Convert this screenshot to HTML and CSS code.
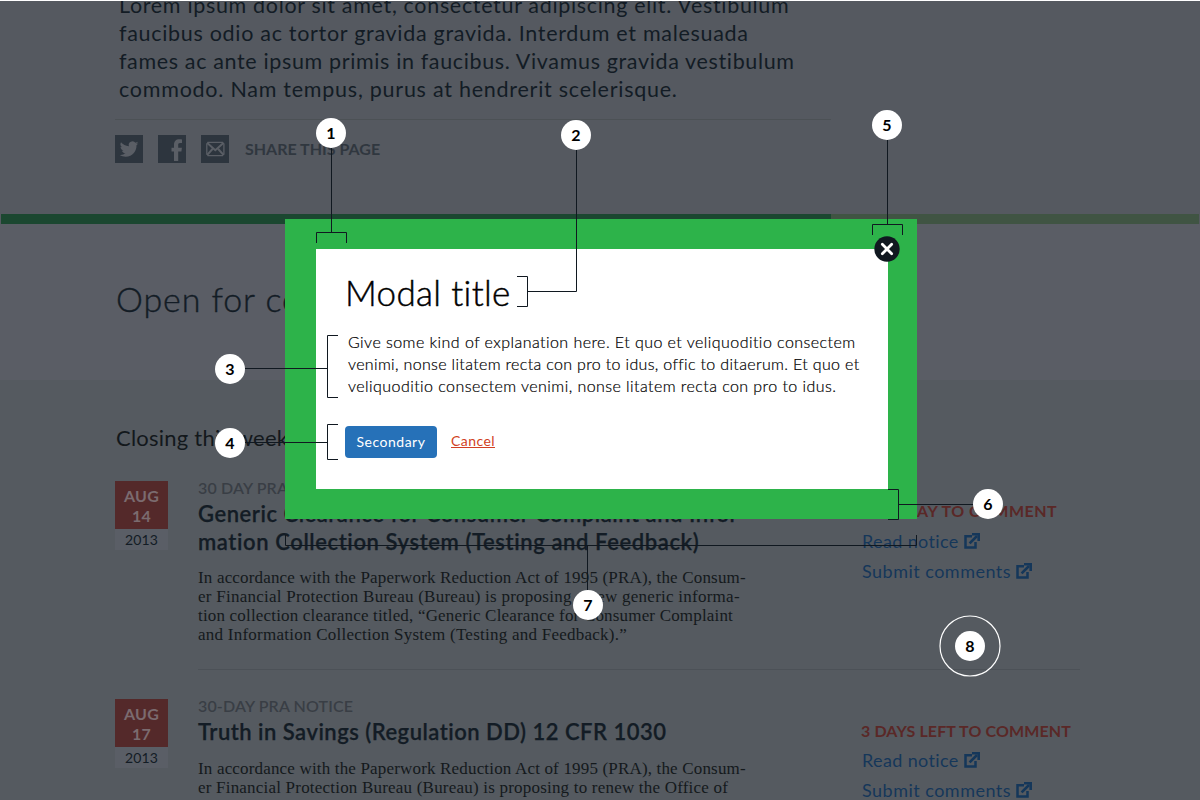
FILE: index.html
```html
<!DOCTYPE html>
<html lang="en">
<head>
<meta charset="utf-8">
<title>Modal anatomy</title>
<link rel="stylesheet" href="styles.css">
</head>
<body>
<svg class="defs" width="0" height="0" aria-hidden="true">
  <symbol id="ext" viewBox="0 0 16 16">
    <path d="M8 3.200H1.500v11.300h10V9" fill="none" stroke="currentColor" stroke-width="2.500"/>
    <path d="M5.600 10.400L13 3" fill="none" stroke="currentColor" stroke-width="2.600"/>
    <path d="M8 0h8v8h-2.600V2.600H8z" fill="currentColor"/>
  </symbol>
</svg>

<main class="page">
  <section class="hero">
    <p class="lead">
      <span class="l1">Lorem ipsum dolor sit amet, consectetur adipiscing elit. Vestibulum</span>
      <span class="l2">faucibus odio ac tortor gravida gravida. Interdum et malesuada</span>
      <span class="l3">fames ac ante ipsum primis in faucibus. Vivamus gravida vestibulum</span>
      <span class="l4">commodo. Nam tempus, purus at hendrerit scelerisque.</span>
    </p>
    <div class="share">
      <svg class="social" viewBox="0 0 28 28"><rect width="28" height="28" fill="#2d353e"/><path fill="#5a5e65" d="M23.4 8.3c-.7.3-1.4.5-2.2.6.8-.5 1.4-1.2 1.7-2.1-.7.4-1.6.8-2.4.9a3.8 3.8 0 0 0-6.6 3.5c-3.200-.2-6-1.700-7.900-4a3.900 3.900 0 0 0 1.200 5.100c-.6 0-1.200-.2-1.700-.5 0 1.800 1.300 3.500 3.100 3.800-.6.1-1.100.2-1.700.1.500 1.500 1.900 2.600 3.600 2.600A7.700 7.700 0 0 1 4.800 20c1.700 1.100 3.700 1.700 5.900 1.700 7.100 0 11.100-6 10.800-11.400.7-.5 1.400-1.200 1.900-2z"/></svg>
      <svg class="social" viewBox="0 0 28 28"><rect width="28" height="28" fill="#2d353e"/><path fill="#5a5e65" d="M16 26V16.500h-2.500v-3.800H16V9.800C16 6.200 18 4.200 21.300 4.200c1.200 0 2.200.1 2.700.2v3.500h-1.900c-1.500 0-1.900.7-1.900 1.900v2.900h3.700l-.5 3.800h-3.200V26z"/></svg>
      <svg class="social" viewBox="0 0 28 28"><rect width="28" height="28" fill="#2d353e"/><g fill="none" stroke="#5a5e65"><path stroke-width="1.300" d="M5.800 8.500v11M22.900 8.500v11"/><path stroke-width="2" d="M6 7.800l8.300 7.400 8.400-7.400M6 20.200l5.500-6.200M22.700 20.200l-5.500-6.200"/><path stroke-width="1.300" d="M6.500 7.400H22M6.500 20.600H22"/></g></svg>
      <span class="share-text">SHARE THIS PAGE</span>
    </div>
  </section>
  <div class="bar"><div class="bar-main"></div><div class="bar-side"></div></div>
  <section class="intro"><h1 class="intro-title">Open for comment</h1></section>
  <section class="list">
    <h2 class="list-title">Closing this week</h2>
    <article class="item">
      <div class="date"><div class="date-day">AUG<br>14</div><div class="date-year">2013</div></div>
      <div class="item-body">
        <div class="label">30 DAY PRA NOTICE</div>
        <h3 class="item-title"><span class="t1">Generic Clearance for Consumer Complaint and Infor-</span><span class="t2">mation Collection System (Testing and Feedback)</span></h3>
        <p class="text">
          <span class="b1">In accordance with the Paperwork Reduction Act of 1995 (PRA), the Consum-</span>
          <span class="b2">er Financial Protection Bureau (Bureau) is proposing a new generic informa-</span>
          <span class="b3">tion collection clearance titled, “Generic Clearance for Consumer Complaint</span>
          <span class="b4">and Information Collection System (Testing and Feedback).”</span>
        </p>
      </div>
      <div class="side">
        <div class="due due-last">LAST DAY TO COMMENT</div>
        <a class="link read">Read notice<svg class="ext"><use href="#ext"/></svg></a>
        <a class="link">Submit comments<svg class="ext"><use href="#ext"/></svg></a>
      </div>
    </article>
    <div class="rule"></div>
    <article class="item item-second">
      <div class="date"><div class="date-day">AUG<br>17</div><div class="date-year">2013</div></div>
      <div class="item-body">
        <div class="label">30-DAY PRA NOTICE</div>
        <h3 class="item-title"><span class="t3">Truth in Savings (Regulation DD) 12 CFR 1030</span></h3>
        <p class="text">
          <span class="b1">In accordance with the Paperwork Reduction Act of 1995 (PRA), the Consum-</span>
          <span class="b5">er Financial Protection Bureau (Bureau) is proposing to renew the Office of</span>
        </p>
      </div>
      <div class="side">
        <div class="due">3 DAYS LEFT TO COMMENT</div>
        <a class="link read">Read notice<svg class="ext"><use href="#ext"/></svg></a>
        <a class="link">Submit comments<svg class="ext"><use href="#ext"/></svg></a>
      </div>
    </article>
  </section>
</main>

<div class="modal-frame">
  <div class="modal">
    <h2 class="modal-title">Modal title</h2>
    <p class="modal-text">
      <span class="p1">Give some kind of explanation here. Et quo et veliquoditio consectem</span>
      <span class="p2">venimi, nonse litatem recta con pro to idus, offic to ditaerum. Et quo et</span>
      <span class="p3">veliquoditio consectem venimi, nonse litatem recta con pro to idus.</span>
    </p>
    <div class="actions"><span class="button">Secondary</span><a class="cancel">Cancel</a></div>
  </div>
  <svg class="close" viewBox="0 0 26 26"><circle cx="13" cy="13" r="12.700" fill="#101820"/><path d="M8.300 8.300l9.400 9.400M17.700 8.300l-9.400 9.400" stroke="#fff" stroke-width="2.800" stroke-linecap="round"/></svg>
</div>

<svg class="callouts" width="1200" height="800" viewBox="0 0 1200 800">
  <g fill="none" stroke="#101820" stroke-width="1">
    <path d="M331.500 148V232M316.500 243V232.500H346.500V243"/>
    <path d="M576.500 150V291.500H528M517 276.500H527.500V306.500H517"/>
    <path d="M245 368.500H327M338 335.500H327.500V397.500H338"/>
    <path d="M245 442.500H327M338 424.500H327.500V459.500H338"/>
    <path d="M887.500 140V224M872.500 235V224.500H902.500V235"/>
    <path d="M973 504.500H899M888 489.500H898.500V519.500H888"/>
    <path d="M587.500 590V546M285.500 535V545.500H916.500V535"/>
  </g>
  <circle cx="970" cy="646" r="30" fill="none" stroke="#fff" stroke-width="1.200"/>
</svg>
<span class="pin pin-1">1</span>
<span class="pin pin-2">2</span>
<span class="pin pin-3">3</span>
<span class="pin pin-4">4</span>
<span class="pin pin-5">5</span>
<span class="pin pin-6">6</span>
<span class="pin pin-7">7</span>
<span class="pin pin-8">8</span>
</body>
</html>
```

FILE: styles.css
```css
* { box-sizing: border-box; }
body {
  margin: 0;
  width: 1200px;
  height: 800px;
  overflow: hidden;
  position: relative;
  background: #555960;
  font-family: Lato, "Liberation Sans", sans-serif;
  color: #131c25;
}
h1, h2, h3, p { margin: 0; font-weight: 400; }
.defs { position: absolute; }
.page { height: 800px; overflow: hidden; border-top: 1px solid #fff; }

.hero { height: 213px; padding: 0 0 0 115px; overflow: hidden; }
.lead { margin: -10px 0 16px 4px; font-size: 21.5px; line-height: 28px; }
.lead span, .item-title span, .text span, .modal-text span { display: block; white-space: nowrap; }
.l1 { letter-spacing: .67px; }
.l2 { letter-spacing: .7px; }
.l3 { letter-spacing: .64px; }
.l4 { letter-spacing: .75px; }
.share { width: 716px; border-top: 1px solid #4c5155; padding-top: 15px; display: flex; gap: 15px; align-items: center; }
.social { width: 28px; height: 28px; display: block; }
.share-text { font-size: 16px; font-weight: 700; line-height: 20px; color: #30373f; margin-left: 1px; }

.bar { height: 10px; display: flex; margin: 0 1px; }
.bar-main { width: 830px; background: #1b4730; }
.bar-side { flex: 1; background: #405443; }

.intro { height: 156px; padding: 55px 0 0 116px; background: #5a5d65; }
.intro-title { font-size: 34px; font-weight: 300; line-height: 40px; letter-spacing: .9px; -webkit-text-stroke: .4px currentColor; }

.list { padding: 44px 0 0 115px; background: #555a60; }
.list-title { font-size: 22px; line-height: 28px; letter-spacing: .232px; margin: 0 0 26px 1px; color: #13181c; }
.item { display: grid; grid-template-columns: 53px 600px 1fr; column-gap: 30px; }
.item .side { margin-left: 34px; }
.date { margin-top: 3px; text-align: center; }
.date-day { height: 48px; padding-top: 5px; background: #54292a; color: #7b6b6f; font-size: 16px; font-weight: 700; line-height: 20px; letter-spacing: .3px; }
.date-year { height: 21px; background: #5a5e66; font-size: 14px; line-height: 22px; letter-spacing: .15px; }
.label { height: 22px; font-size: 16px; font-weight: 600; line-height: 20px; letter-spacing: .14px; color: #393e45; }
.item-title { font-size: 22px; font-weight: 600; line-height: 28px; -webkit-text-stroke: .25px currentColor; }
.t1 { letter-spacing: .54px; }
.t2 { letter-spacing: .6px; }
.t3 { letter-spacing: .49px; }
.text { margin-top: 12px; font: 17px/19px "Liberation Serif", serif; color: #14191c; }
.b1 { letter-spacing: .17px; }
.b2 { letter-spacing: .25px; }
.b3 { letter-spacing: .179px; }
.b4 { letter-spacing: .246px; }
.b5 { letter-spacing: .204px; }
.side { padding-top: 23px; }
.due { font-size: 16px; font-weight: 700; line-height: 20px; letter-spacing: .126px; color: #5a2827; margin-bottom: 5px; margin-left: -1px; }
.due-last { letter-spacing: .5px; }
.link { display: flex; align-items: center; height: 30px; font-size: 18px; line-height: 30px; letter-spacing: .48px; color: #15375a; }
.read { letter-spacing: .37px; }
.ext { width: 16px; height: 16px; margin-left: 5px; }
.rule { height: 1px; width: 882px; margin: 25px 0 26px 83px; background: #4c5157; }
.item-second .text { margin-top: 13px; }
.item-second .side { padding-top: 25px; }
.item-second .due { margin-bottom: 4px; }

.modal-frame { position: absolute; left: 285px; top: 219px; width: 632px; height: 300px; background: #2db34a; padding: 30px 29px 30px 31px; }
.modal { height: 240px; background: #fff; padding: 22px 0 0 29px; color: #000; }
.modal-title { font-size: 35px; font-weight: 300; line-height: 42px; letter-spacing: .33px; -webkit-text-stroke: .45px currentColor; }
.modal-text { margin: 18px 0 0 3px; font-size: 16px; font-weight: 300; line-height: 22px; -webkit-text-stroke: .2px currentColor; }
.p1 { letter-spacing: .45px; }
.p2 { letter-spacing: .34px; }
.p3 { letter-spacing: .44px; }
.actions { display: flex; align-items: center; gap: 14px; margin-top: 29px; }
.button { width: 92px; height: 32px; border-radius: 4px; background: #2671b8; color: #fff; font-size: 14px; line-height: 31px; text-align: center; letter-spacing: .5px; }
.cancel { font-size: 14px; line-height: 16px; margin-bottom: 2px; letter-spacing: .43px; color: #d13f23; text-decoration: underline; }
.close { position: absolute; left: 589px; top: 17px; width: 26px; height: 26px; }

.callouts { position: absolute; left: 0; top: 0; }
.pin { position: absolute; width: 30px; height: 30px; border-radius: 50%; background: #fff; color: #000; font-size: 16px; font-weight: 700; line-height: 30px; text-align: center; }
.pin-1 { left: 316px; top: 118px; }
.pin-2 { left: 561px; top: 120px; }
.pin-3 { left: 215px; top: 354px; }
.pin-4 { left: 215px; top: 428px; }
.pin-5 { left: 872px; top: 110px; }
.pin-6 { left: 973px; top: 489px; }
.pin-7 { left: 573px; top: 590px; }
.pin-8 { left: 955px; top: 631px; }
```
